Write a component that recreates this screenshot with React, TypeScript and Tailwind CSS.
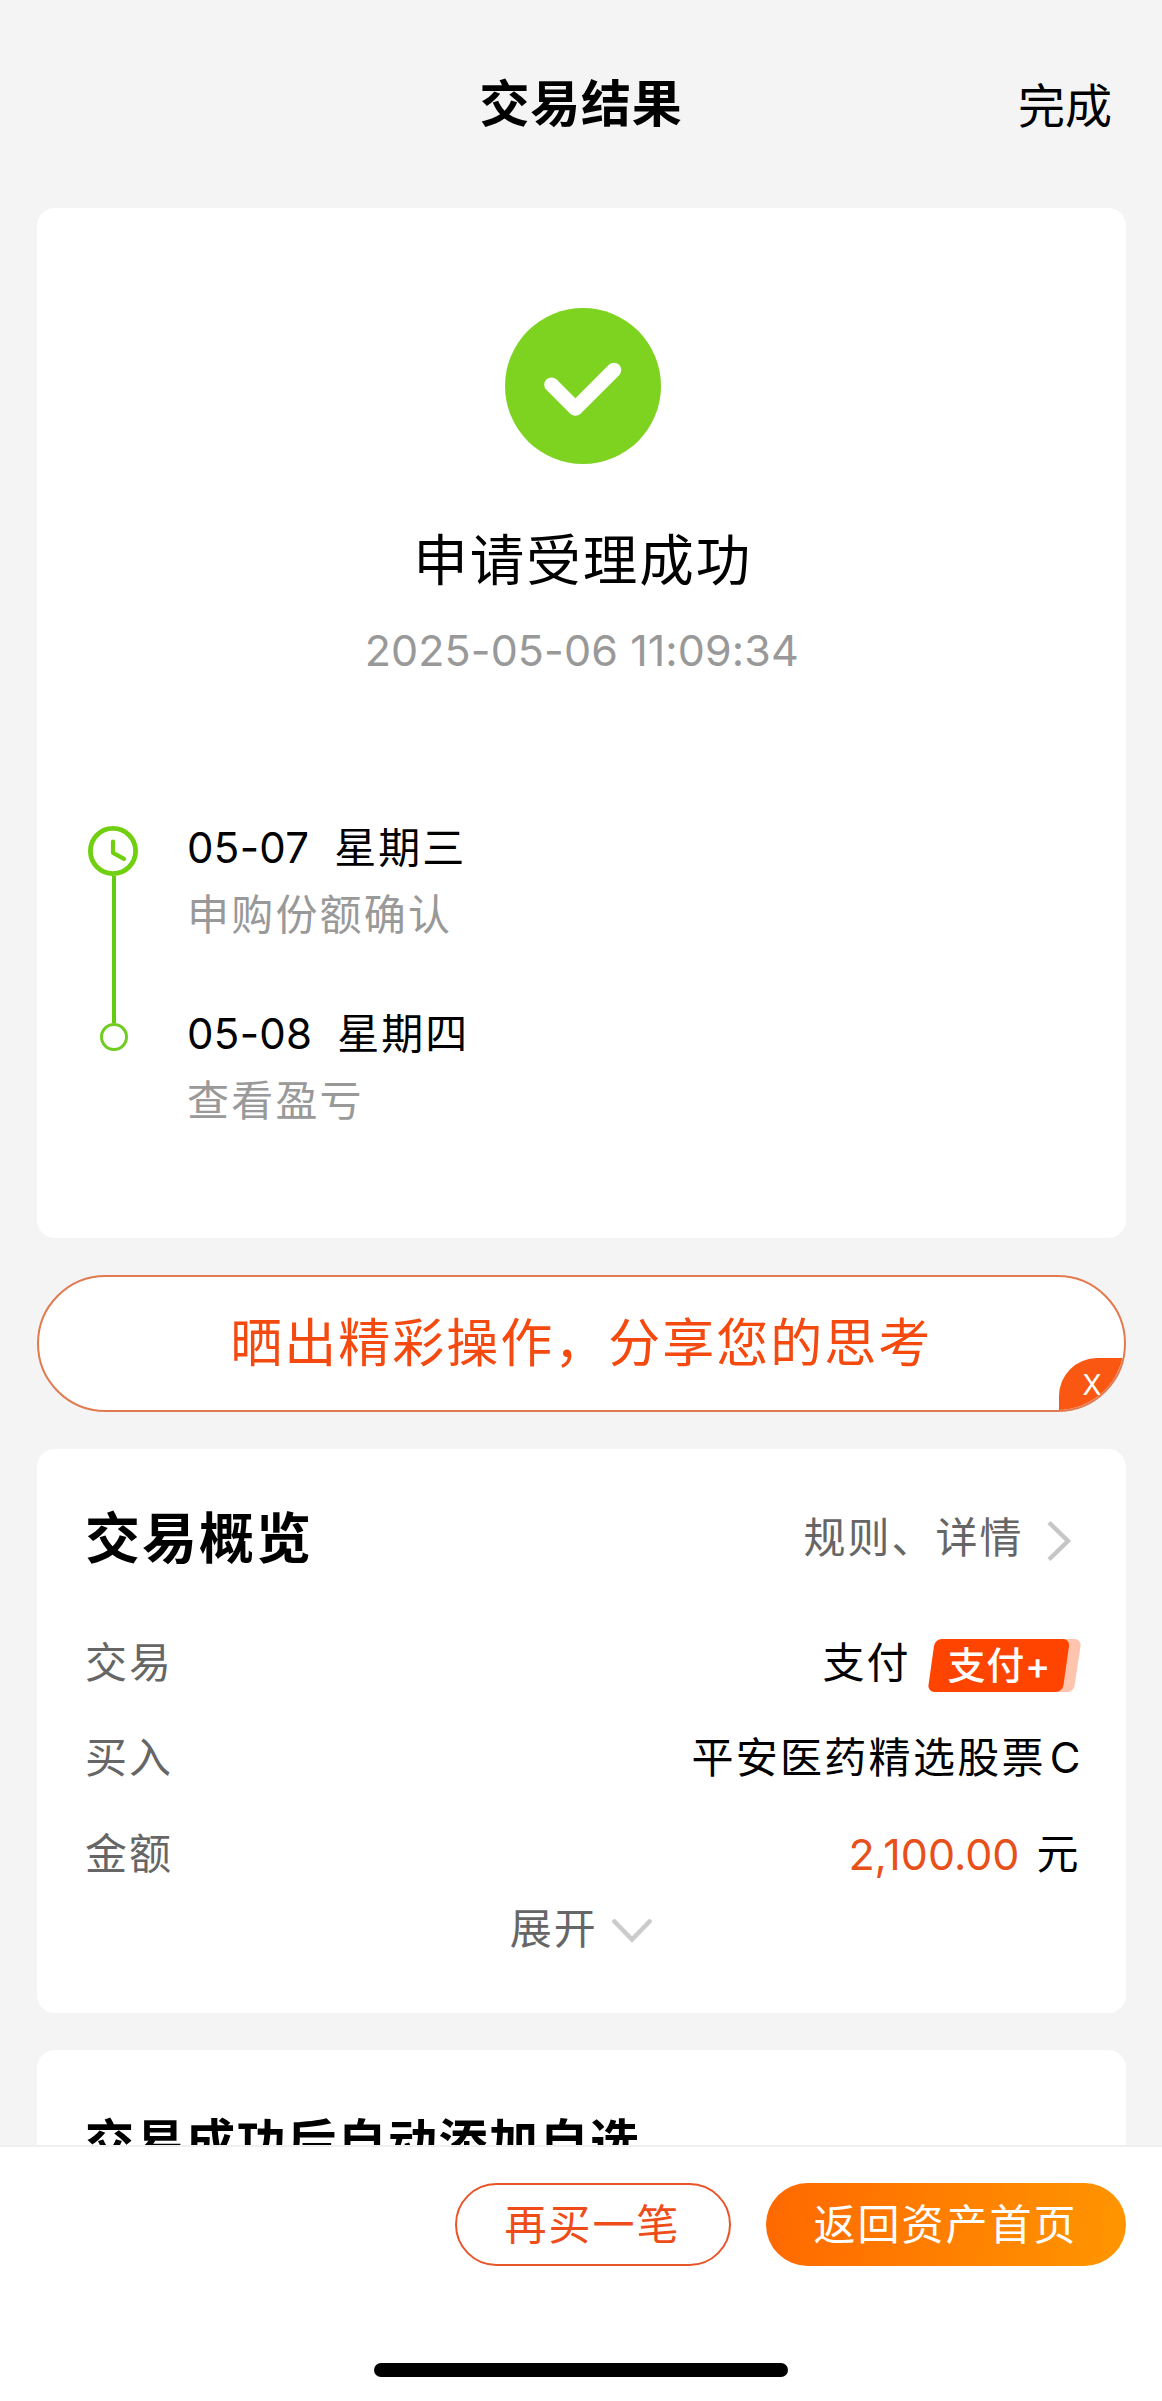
import type { ReactNode } from "react";

interface Step {
  date: string;
  weekday: string;
  label: string;
}

const STEPS: Step[] = [
  { date: "05-07", weekday: "星期三", label: "申购份额确认" },
  { date: "05-08", weekday: "星期四", label: "查看盈亏" },
];

function SuccessIcon() {
  return (
    <svg className="ml-[3px] h-[156px] w-[156px]" viewBox="0 0 156 156" fill="none">
      <circle cx="78" cy="78" r="78" fill="#7ed321" />
      <path
        d="M46.5 76.7 70.4 100.6 109 62"
        stroke="#fff"
        strokeWidth="14.5"
        strokeLinecap="round"
        strokeLinejoin="round"
      />
    </svg>
  );
}

function ClockIcon() {
  return (
    <svg className="h-[50px] w-[50px] self-start" viewBox="0 0 50 50" fill="none" stroke="#70d010">
      <circle cx="25" cy="25" r="22.6" strokeWidth="4.8" />
      <path d="M25 15.500v11.300l11 6" strokeWidth="4.2" strokeLinecap="round" strokeLinejoin="round" />
    </svg>
  );
}

function PayBadge() {
  return (
    <span className="relative ml-[17px] mt-[5px] flex h-[53px] w-[153px] items-center">
      <svg className="absolute inset-0 h-full w-full" viewBox="0 0 153 53">
        <path d="M120 0h26.500a6 6 0 0 1 6 7l-6 40a7 7 0 0 1-7 6h-20z" fill="#ffc4ae" />
        <path
          d="M14 0h121a6 6 0 0 1 6 7l-5.500 39a8 8 0 0 1-8 7H6.500a6 6 0 0 1-6-7L6 7a8 8 0 0 1 8-7z"
          fill="#ff4400"
        />
      </svg>
      <span className="relative pl-[20px] text-[38px] font-medium leading-[53px] tracking-[0.8px] text-white">
        支付+
      </span>
    </span>
  );
}

function Row({ label, children }: { label: string; children: ReactNode }) {
  return (
    <div className="flex h-[95.5px] items-center justify-between leading-[50px]">
      <span className="text-[#666]">{label}</span>
      <span className="flex items-center text-black">{children}</span>
    </div>
  );
}

export default function App() {
  return (
    <div className="flex h-[2401px] w-[1162px] flex-col overflow-hidden bg-[#f4f4f4] font-['Inter','Noto_Sans_CJK_SC',sans-serif] text-[42px] tracking-[2px] text-black">
      {/* Title bar */}
      <header className="grid h-[208px] shrink-0 grid-cols-3 items-center px-[50px]">
        <h1 className="col-start-2 text-center text-[50px] font-bold leading-[60px] tracking-[0.7px]">
          交易结果
        </h1>
        <button className="mt-[4px] text-right text-[47px] leading-[60px] tracking-[0px]">完成</button>
      </header>

      <main className="flex min-h-0 flex-1 flex-col overflow-hidden pl-[37px] pr-[36.5px]">
        {/* Result */}
        <section className="flex h-[1030px] shrink-0 flex-col items-center rounded-[18px] bg-white pt-[100px]">
          <SuccessIcon />
          <h2 className="mt-[66px] pl-[3px] text-[54.5px] leading-[60px]">申请受理成功</h2>
          <p className="mt-[35px] pl-[1px] text-[43px] leading-[50px] tracking-[0.1px] text-[#999]">
            2025-05-06 11:09:34
          </p>

          <div className="mt-[148px] flex w-full pl-[51px]">
            <div className="mt-[3px] flex w-[52px] flex-col items-center">
              <ClockIcon />
              <div className="h-[147px] w-[4px] bg-[#64cb12]" />
              <div className="h-[28px] w-[28px] rounded-full border-[3px] border-[#70cc22]" />
            </div>
            <ul className="ml-[47px]">
              {STEPS.map((step) => (
                <li key={step.date} className="h-[186px]">
                  <p className="flex gap-[25px] leading-[50px]">
                    <span className="tracking-[0.3px]">{step.date}</span>
                    <span>{step.weekday}</span>
                  </p>
                  <p className="mt-[17px] leading-[50px] tracking-[2.2px] text-[#999]">{step.label}</p>
                </li>
              ))}
            </ul>
          </div>
        </section>

        {/* Share banner */}
        <section className="relative mt-[37px] flex h-[137px] shrink-0 items-center justify-center overflow-hidden rounded-full border-2 border-[#e27a50] bg-white text-[52px] leading-[60px] text-[#f4490f]">
          晒出精彩操作，分享您的思考
          <button className="absolute -bottom-[2px] -right-[2px] flex h-[54px] w-[67px] items-center rounded-tl-[38px] bg-[#fa5812] pl-[24px] text-[28px] leading-none tracking-[0px] text-white">
            X
          </button>
        </section>

        {/* Overview */}
        <section className="mt-[37px] h-[564px] shrink-0 rounded-[18px] bg-white pl-[48px] pr-[45px] pt-[59px]">
          <div className="flex h-[60px] items-center justify-between">
            <h3 className="text-[55px] font-bold leading-[60px]">交易概览</h3>
            <span className="flex items-center leading-[50px] text-[#666]">
              规则、详情
              <svg className="ml-[22px] mr-[9px] mt-[5px] h-[42px] w-[26px]" viewBox="0 0 26 42" fill="none">
                <path d="M3 2.500 22 21 3 39.500" stroke="#c6c6c6" strokeWidth="4.4" />
              </svg>
            </span>
          </div>
          <div className="mt-[47px]">
            <Row label="交易">
              支付
              <PayBadge />
            </Row>
            <Row label="买入">
              <span className="tracking-[2.3px]">平安医药精选股票</span>
              <span className="ml-[4px] tracking-[0px]">C</span>
            </Row>
            <Row label="金额">
              <span className="text-[43px] tracking-[0px] text-[#e8501a]">2,100.00</span>
              <span className="ml-[17px]">元</span>
            </Row>
          </div>
          <button className="mx-auto mt-[2px] flex items-center pr-[4px] leading-[50px] text-[#666]">
            展开
            <svg className="ml-[14px] mt-[5px] h-[24px] w-[40px]" viewBox="0 0 40 24" fill="none">
              <path d="M2.500 2.500 20 20.500 37.500 2.500" stroke="#cbcbcb" strokeWidth="4.600" strokeLinecap="round" />
            </svg>
          </button>
        </section>

        {/* Watchlist card, cut off by the footer */}
        <section className="mt-[37px] h-[200px] shrink-0 rounded-t-[18px] bg-white px-[48px] pt-[63px]">
          <h3 className="text-[49px] font-bold leading-[60px] tracking-[1.5px]">交易成功后自动添加自选</h3>
        </section>
      </main>

      {/* Actions */}
      <footer className="flex h-[256px] shrink-0 flex-col border-t-2 border-[#efefef] bg-white">
        <div className="mt-[36px] flex justify-end gap-[35px] pr-[36.5px] leading-[50px]">
          <button className="h-[83px] w-[276px] rounded-full border-2 border-[#e8552a] text-[#ee4c18]">
            再买一笔
          </button>
          <button className="h-[83px] w-[360px] rounded-full bg-[linear-gradient(100deg,#ff6800,#ff9600)] text-white">
            返回资产首页
          </button>
        </div>
        <div className="mx-auto mt-[97px] h-[14px] w-[414px] rounded-full bg-black" />
      </footer>
    </div>
  );
}
